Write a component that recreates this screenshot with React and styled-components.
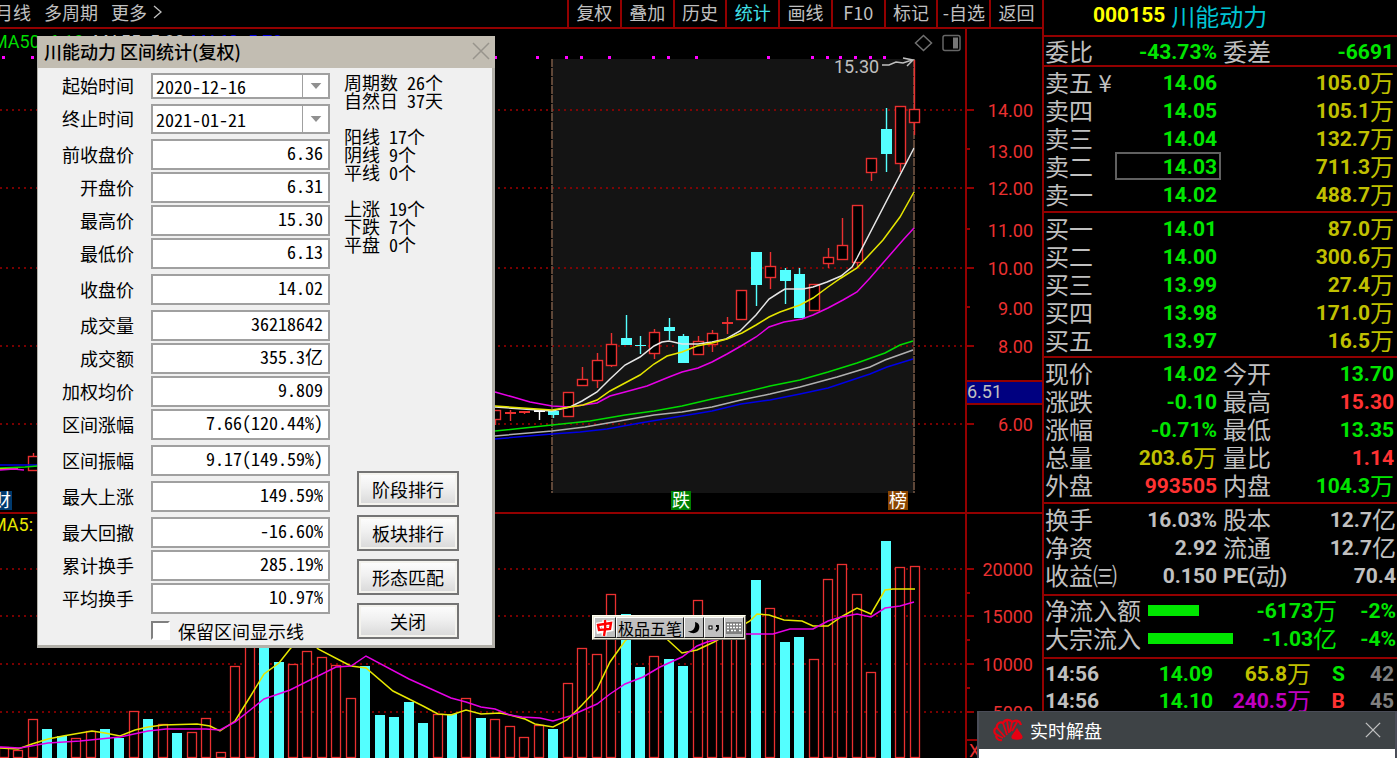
import React, { useState } from 'react'
import styled, { createGlobalStyle } from 'styled-components'

const RED = '#ea3030'
const LINE = '#930000'
const CYAN = '#54ffff'
const GREEN = '#00e600'
const GREY = '#c0c0c0'
const YELLOW = '#c0c000'

const cjk = "'Noto Sans CJK SC', sans-serif"
const latin = "Roboto, 'Noto Sans CJK SC', sans-serif"

const GlobalStyle = createGlobalStyle`
  * {
    box-sizing: border-box;
  }

  body {
    margin: 0;
    background: #000;
    color: ${GREY};
    font-family: ${cjk};
    overflow: hidden;
  }

  button, select, input {
    font-family: inherit;
  }
`

const Page = styled.div`
  position: relative;
  display: grid;
  grid-template-columns: minmax(0, 1fr) 355px;
  height: 100vh;
  overflow: hidden;
`

/* ---------- left side: toolbar and charts ---------- */

const Main = styled.main`
  min-width: 0;
`

const Toolbar = styled.nav`
  display: flex;
  justify-content: space-between;
  height: 29px;
  border-bottom: 2px solid ${LINE};
`

const Periods = styled.div`
  display: flex;
  gap: 13px;
  margin-left: -5px;
`

const PlainButton = styled.button`
  display: flex;
  align-items: center;
  gap: 6px;
  padding: 0 0 4px;
  border: 0;
  background: none;
  color: ${GREY};
  font-size: 18px;
  line-height: 22px;
  white-space: nowrap;
`

const Tools = styled.div`
  display: grid;
  grid-template-columns: repeat(9, 1fr);
  width: 475px;
`

const ToolButton = styled.button`
  padding: 0 0 4px;
  border: 0;
  border-left: 2px solid ${LINE};
  background: none;
  color: ${({ $active }) => ($active ? '#40e0e8' : GREY)};
  font-size: 18px;
  line-height: 22px;
  white-space: nowrap;
`

const Pane = styled.section`
  display: grid;
  grid-template-columns: minmax(0, 1fr) 77px;
  border-bottom: 2px solid ${LINE};

  &:last-child {
    border-bottom: 0;
  }
`

const Plot = styled.svg`
  display: block;
  width: 100%;
  height: ${({ $height }) => $height}px;
  font-family: ${latin};
`

const Axis = styled.svg`
  display: block;
  width: 77px;
  height: ${({ $height }) => $height}px;
  border-left: 2px solid ${LINE};
  font-family: ${latin};
  font-size: 18px;
`

/* ---------- right side: quote panel ---------- */

const QuotePanel = styled.aside`
  border-left: 2px solid ${LINE};
  overflow: hidden;
`

const Heading = styled.h1`
  display: flex;
  align-items: center;
  gap: 6px;
  height: 37px;
  margin: 0;
  padding: 0 0 4px 49px;
  border-bottom: 2px solid ${LINE};
  color: #00c4d4;
  font-size: 24px;
  font-weight: 400;
  line-height: 28px;
`

const QuoteTable = styled.table`
  width: 100%;
  table-layout: fixed;
  border-collapse: collapse;

  th, td {
    height: ${({ $row }) => $row || 28}px;
    padding: 0;
    font-size: 24px;
    font-weight: 400;
    line-height: ${({ $row }) => $row || 28}px;
    text-align: right;
    white-space: nowrap;
    overflow: visible;
  }

  th {
    text-align: left;
  }
`

const Block = styled.div`
  padding: ${({ $pad }) => $pad || '1px 3px 3px 1px'};
  border-bottom: 2px solid ${LINE};
`

const Value = styled.td`
  padding-right: ${({ $inner }) => ($inner ? 4 : 0)}px !important;
  color: ${({ $color }) => $color};
  outline: ${({ $focus }) => ($focus ? '2px solid #606060' : 'none')};
  outline-offset: -2px;
`

const SecondLabel = styled.th`
  padding-left: 2px !important;
`

const Num = styled.b`
  color: ${({ $color }) => $color || 'inherit'};
  font-family: ${latin};
  font-size: 21px;
  line-height: 1;
  vertical-align: 2px;
`

const FlowBar = styled.div`
  height: 11px;
  background: ${GREEN};
`

/* ---------- interval statistics dialog ---------- */

const Dialog = styled.form`
  position: absolute;
  top: 36px;
  left: 37px;
  width: 458px;
  border: solid #b2b0a9;
  border-width: 0 3px 3px 1px;
  background: #f0f0f0;
  color: #000;
  font-size: 18px;
  line-height: 18px;
`

const DialogTitle = styled.header`
  display: flex;
  align-items: center;
  justify-content: space-between;
  height: 32px;
  margin-right: -3px;
  padding: 0 5px 2px 6px;
  background: #c2bdb2;

  h2 {
    margin: 0;
    font-size: 18px;
    font-weight: 500;
  }
`

const CloseButton = styled.button`
  display: flex;
  padding: 0;
  border: 0;
  background: none;
  color: ${({ $color }) => $color};
`

const DialogBody = styled.div`
  display: flex;
  gap: 14px;
  padding: 5px 0;
`

const Fields = styled.div`
  display: flex;
  flex-direction: column;
  gap: 2px;
  width: 292px;
`

const Field = styled.div`
  display: grid;
  grid-template-columns: 96px 179px;
  column-gap: 17px;
  align-items: center;
  margin-top: ${({ $spaced }) => ($spaced ? 3 : 0)}px;

  label {
    padding-bottom: 2px;
    text-align: right;
  }
`

const TextBox = styled.input`
  width: 100%;
  height: 31px;
  padding: 0 5px 5px;
  border: 2px solid #a0a0a0;
  background: #fff;
  color: #000;
  font-size: 18px;
  font-feature-settings: 'hwid';
  line-height: 22px;
  text-align: right;
`

const DateBox = styled.div`
  display: grid;
  grid-template-columns: 151px 28px;
  grid-template-rows: ${({ $height }) => $height}px;

  select {
    grid-area: 1 / 1 / 2 / 3;
    width: 100%;
    height: 100%;
    padding: 0 30px 0 3px;
    border: 2px solid #a0a0a0;
    border-radius: 0;
    background: #fff;
    color: #000;
    appearance: none;
    font-size: 18px;
    font-feature-settings: 'hwid';
    line-height: 22px;
  }

  svg {
    grid-area: 1 / 2 / 2 / 3;
    width: 28px;
    height: 100%;
    border-left: 1px solid #a0a0a0;
    pointer-events: none;
  }
`

const KeepLine = styled.label`
  display: flex;
  align-items: center;
  gap: 8px;
  margin: 5px 0 0 113px;

  input {
    width: 19px;
    height: 19px;
    margin: 0;
    appearance: none;
    border: 2px solid #fff;
    border-top-color: #808080;
    border-left-color: #808080;
    background: #fff;
  }

  input:checked {
    background: #808080;
  }
`

const Side = styled.div`
  display: flex;
  flex-direction: column;
  justify-content: space-between;
`

const Summary = styled.p`
  margin: 0;
  font-feature-settings: 'hwid';
  white-space: pre-line;
`

const Actions = styled.div`
  display: flex;
  flex-direction: column;
  gap: 8px;
  margin-left: 13px;
  padding-bottom: 1px;
`

const ActionButton = styled.button`
  width: 102px;
  height: 36px;
  padding: 0;
  border: 2px solid #747474;
  background: linear-gradient(#fefefe, #f0f0f0 45%, #d8d8d8);
  box-shadow: inset 0 0 0 2px #f4f3ee;
  color: #000;
  font-size: 18px;
`

/* ---------- floating bits ---------- */

const ImeBar = styled.div`
  position: absolute;
  top: 615px;
  left: 592px;
  display: flex;
  height: 25px;
  padding: 1px;
  border: 1px solid #fffff0;
  border-right-color: #707068;
  border-bottom-color: #707068;
  background: #ece9d8;
`

const ImeButton = styled.button`
  display: flex;
  align-items: center;
  justify-content: center;
  min-width: 20px;
  padding: 0 1px;
  border: 1px solid #fff;
  border-right-color: #202020;
  border-bottom-color: #202020;
  background: #c0c0c0;
  color: #000;
  font-size: 16px;
  line-height: 18px;
`

const Notice = styled.section`
  position: absolute;
  right: 0;
  bottom: 0;
  width: 420px;
  border: solid #4a4d58;
  border-width: 1px 2px 0;
`

const NoticeHead = styled.header`
  display: flex;
  align-items: center;
  gap: 5px;
  height: 37px;
  padding: 0 14px 2px;
  background: #3e4346;

  h2 {
    flex: 1;
    margin: 0;
    color: #fff;
    font-size: 18px;
    font-weight: 400;
    line-height: 24px;
  }
`

const NoticeBody = styled.div`
  height: 9px;
  background: #fff;
`

/* ---------- data ---------- */

const tools = ['复权', '叠加', '历史', '统计', '画线', 'F10', '标记', '-自选', '返回']

// r = hollow red bar, c = filled cyan bar
const volumes = [
  'r747', 'r750', 'r719', 'c729', 'c736', 'r738', 'r731', 'c729', 'c738', 'r711', 'c719',
  'r724', 'c733', 'r732', 'r718', 'r752', 'r666', 'r634', 'c620', 'c662', 'r664', 'r651',
  'r657', 'r665', 'r698', 'c666', 'c715', 'c717', 'c702', 'c723', 'r714', 'c714', 'r698',
  'c718', 'r719', 'r726', 'r737', 'r725', 'c729', 'r683', 'r648', 'r654', 'r594', 'c614',
  'c667', 'r656', 'c659', 'c666', 'r600', 'r634', 'r628', 'r620', 'c580', 'r608', 'c642',
  'c637', 'r659', 'r579', 'r564', 'r594', 'r672', 'c541', 'r567', 'r566',
]

// [slot, colour, body top, body bottom, wick top, wick bottom]
const candles = [
  [2, 'r', 456, 470, 453, 470],
  [34, 'r', 410, 419, 410, 425],
  [35, 'r', 412, 414, 410, 421],
  [36, 'r', 411, 413, 411, 414],
  [37, 'w', 410, 412, 410, 420],
  [38, 'c', 411, 415, 409, 418],
  [39, 'r', 392, 416, 392, 416],
  [40, 'r', 379, 385, 367, 385],
  [41, 'r', 360, 380, 353, 388],
  [42, 'r', 344, 365, 333, 367],
  [43, 'c', 338, 345, 315, 345],
  [44, 'c', 345, 346, 336, 354],
  [45, 'r', 332, 353, 329, 359],
  [46, 'c', 327, 331, 318, 340],
  [47, 'c', 336, 363, 334, 363],
  [48, 'r', 341, 354, 336, 354],
  [49, 'r', 333, 344, 330, 352],
  [50, 'r', 322, 324, 317, 334],
  [51, 'r', 290, 319, 290, 319],
  [52, 'c', 252, 285, 252, 306],
  [53, 'r', 266, 277, 252, 289],
  [54, 'c', 270, 281, 268, 304],
  [55, 'c', 274, 318, 268, 318],
  [56, 'r', 284, 310, 284, 310],
  [57, 'r', 257, 263, 248, 268],
  [58, 'r', 245, 259, 218, 259],
  [59, 'r', 205, 262, 205, 268],
  [60, 'r', 158, 172, 158, 181],
  [61, 'c', 129, 154, 108, 172],
  [62, 'r', 106, 163, 106, 172],
  [63, 'r', 109, 122, 60, 135],
]

const priceLines = [
  { color: '#0000e6', points: '495,439 552,434 580,432 607,429 640,423 682,416 712,411 741,404 770,400 800,394 828,388 870,374 887,367 913,359' },
  { color: '#b0b0b0', points: '495,436 552,431 585,427 625,420 654,415 682,412 712,407 741,400 770,394 800,387 837,377 870,367 885,360 913,350' },
  { color: '#00dc00', points: '495,431 552,425 590,421 625,415 654,411 682,406 712,399 741,393 770,386 800,380 828,372 857,363 885,353 900,345 913,341' },
  { color: '#e600e6', points: '495,392 513,397 530,402 552,406 570,407 583,405 597,403 610,396 625,392 647,386 669,377 682,372 698,368 712,362 727,354 741,346 756,337 769,327 784,322 802,319 813,315 828,308 843,300 857,292 870,278 883,263 903,240 914,228' },
  { color: '#e6e6e6', points: '495,407 552,411 570,407 582,401 597,392 610,379 625,365 640,357 654,346 662,342 669,341 682,344 698,344 712,342 726,339 740,331 756,315 769,299 780,292 785,289 803,289 813,287 827,282 841,276 852,267 857,258 914,148' },
  { color: '#e6e600', points: '495,406 552,410 570,407 583,405 597,400 610,391 625,383 640,375 654,364 667,356 682,352 697,346 712,343 727,339 742,333 756,325 769,317 780,312 800,305 813,298 828,287 841,278 857,268 883,240 900,217 914,192' },
  { color: '#0000e6', points: '0,465 38,465' },
  { color: '#00dc00', points: '0,468 25,467 38,466' },
  { color: '#e6e600', points: '0,469 18,469' },
  { color: '#e600e6', points: '0,470 14,469 24,470' },
]

const volumeLines = [
  { color: '#e6e600', points: '0,748 18,749 32,744 48,739 63,736 92,731 105,733 120,736 135,730 148,727 163,725 197,724 210,726 220,731 235,721 250,697 264,674 279,663 290,649 304,634 318,649 347,664 351,666 366,668 393,691 409,699 423,706 438,714 451,715 466,710 481,714 500,713 510,715 525,719 535,724 553,727 567,720 582,705 597,689 610,662 625,641 640,628 655,628 670,642 682,653 697,650 714,642 750,621 757,614 769,615 784,620 802,621 813,626 828,626 841,617 857,608 871,614 885,590 893,589 915,589' },
  { color: '#e600e6', points: '0,747 20,748 48,743 80,741 120,737 148,731 166,729 206,729 220,730 235,722 264,699 290,690 336,667 351,666 366,656 409,679 451,698 466,702 481,707 495,709 510,715 522,717 540,718 553,721 570,716 597,704 610,694 625,684 643,677 660,667 682,657 697,646 707,642 740,634 773,634 790,629 813,629 828,621 841,617 857,614 871,617 885,608 900,606 914,602' },
]

const dots = [3, 32, 495, 537, 566, 581, 609, 653, 668, 696, 768, 812, 827, 840, 855, 870, 884]

const priceTicks = [['14.00', 110], ['13.00', 151], ['12.00', 188], ['11.00', 230], ['10.00', 268], ['9.00', 308], ['8.00', 346], ['6.00', 424]]
const volumeTicks = [['20000', 569], ['15000', 616], ['10000', 664], ['5000', 712]]

const sells = [['卖五', '14.06', '105.0'], ['卖四', '14.05', '105.1'], ['卖三', '14.04', '132.7'], ['卖二', '14.03', '711.3'], ['卖一', '14.02', '488.7']]
const buys = [['买一', '14.01', '87.0'], ['买二', '14.00', '300.6'], ['买三', '13.99', '27.4'], ['买四', '13.98', '171.0'], ['买五', '13.97', '16.5']]

const prices = [
  ['现价', '14.02', GREEN, '今开', '13.70', GREEN],
  ['涨跌', '-0.10', GREEN, '最高', '15.30', '#ff3232'],
  ['涨幅', '-0.71%', GREEN, '最低', '13.35', GREEN],
  ['总量', '203.6万', YELLOW, '量比', '1.14', '#ff3232'],
  ['外盘', '993505', '#ff3232', '内盘', '104.3万', GREEN],
]

const finance = [
  ['换手', '16.03%', GREY, '股本', '12.7亿', GREY],
  ['净资', '2.92', GREY, '流通', '12.7亿', GREY],
  ['收益㈢', '0.150', GREY, 'PE(动)', '70.4', GREY],
]

const stats = [
  ['前收盘价', '6.36'],
  ['开盘价', '6.31'],
  ['最高价', '15.30'],
  ['最低价', '6.13'],
  ['收盘价', '14.02', true],
  ['成交量', '36218642', true],
  ['成交额', '355.3亿'],
  ['加权均价', '9.809'],
  ['区间涨幅', '7.66(120.44%)'],
  ['区间振幅', '9.17(149.59%)', true],
  ['最大上涨', '149.59%', true],
  ['最大回撤', '-16.60%', true],
  ['累计换手', '285.19%'],
  ['平均换手', '10.97%'],
]

const summary = `周期数 26个
自然日 37天

阳线 17个
阴线 9个
平线 0个

上涨 19个
下跌 7个
平盘 0个`

const slotX = slot => Math.round(3.8 + slot * 14.459)

/* ---------- components ---------- */

// digits are bold latin, the unit behind them is a regular CJK character
const Figure = ({ text }) => {
  const parts = text.match(/[\u4e00-\u9fff\u3220-\u3229]+|[^\u4e00-\u9fff\u3220-\u3229]+/g)
  return parts.map((part, i) =>
    /[\u4e00-\u9fff\u3220-\u3229]/.test(part) ? <span key={i}>{part}</span> : <Num key={i}>{part}</Num>
  )
}

const Grid = ({ rows }) =>
  rows.map(y => (
    <line key={y} x1="0" x2="964" y1={y} y2={y} stroke="#a00000" strokeWidth="2" strokeDasharray="2 4" opacity="0.75" />
  ))

const Lines = ({ lines }) =>
  lines.map((line, i) => (
    <polyline key={i} points={line.points} fill="none" stroke={line.color} strokeWidth="1.5" />
  ))

const Candle = ({ data: [slot, kind, top, bottom, high, low] }) => {
  const x = Math.min(slotX(slot), 914)
  const color = { r: RED, c: CYAN, w: '#ffffff' }[kind]
  const solid = kind !== 'r' || bottom - top < 4
  return (
    <g>
      <line x1={x + 0.5} x2={x + 0.5} y1={high} y2={low} stroke={color} strokeWidth="1.4" />
      {solid ? (
        <rect x={x - 5} y={top} width="11" height={Math.max(bottom - top, 1)} fill={color} />
      ) : (
        <rect x={x - 4.5} y={top + 0.5} width="10" height={bottom - top} fill="#000" stroke={color} strokeWidth="1.4" />
      )}
    </g>
  )
}

const Badge = ({ x, label, color }) => (
  <g>
    <rect x={x} y="491" width="20" height="19" fill={color} />
    <text x={x + 10} y="507" textAnchor="middle" fontSize="18" fill="#fff">{label}</text>
  </g>
)

const PriceChart = () => (
  <Pane>
    <Plot $height={483} viewBox="0 29 965 483" preserveAspectRatio="xMaxYMin meet" role="img" aria-label="K线图">
      <rect x="552" y="59" width="362" height="434" fill="#141414" />
      <Grid rows={[110, 188, 268, 346, 424]} />
      <g fontSize="18">
        <text x="-8" y="48" fill="#00dc00">MA50: 6.18</text>
        <text x="93" y="48" fill={GREY}>MA55: 5.80</text>
        <text x="191" y="48" fill="#0000e6">MA60: 5.73</text>
        <text x="834" y="73" fill={GREY}>15.30</text>
      </g>
      {dots.map(x => <rect key={x} x={x - 1} y="56" width="3" height="3" fill="#ff00ff" />)}
      <path d="M552 59V493M914 59V493" stroke="#6e5240" strokeWidth="2" strokeDasharray="8 1" opacity="0.85" />
      {candles.map(data => <Candle key={data[0]} data={data} />)}
      <Lines lines={priceLines} />
      <path d="M882 65L889 65L896 62L903 63L912 60M903 58L913 60L907 66" fill="none" stroke={GREY} strokeWidth="1.5" />
      <path d="M923.5 35.5L931.5 43L923.5 50.5L915.5 43Z" fill="none" stroke="#707070" strokeWidth="1.5" />
      <rect x="943" y="35.5" width="17" height="15" rx="2" fill="none" stroke="#666" strokeWidth="1.5" />
      <rect x="953" y="37.5" width="5" height="11" fill="#777" />
      <Badge x={-8} label="财" color="#003a6e" />
      <Badge x={671} label="跌" color="#008000" />
      <Badge x={888} label="榜" color="#8a4500" />
    </Plot>
    <Axis $height={483} viewBox="967 29 75 483" fill={RED}>
      {[110, 188, 268, 346, 424].map(y => <rect key={y} x="967" y={y - 1} width="7" height="2" fill={LINE} />)}
      {[149, 229, 307].map(y => <rect key={y} x="967" y={y - 1} width="3" height="2" fill={LINE} />)}
      {priceTicks.map(([label, y]) => <text key={label} x="1033" y={y + 7} textAnchor="end">{label}</text>)}
      <rect x="966" y="381" width="77" height="23" fill="#000080" stroke={LINE} strokeWidth="2" />
      <text x="967" y="398" fill={GREY}>6.51</text>
    </Axis>
  </Pane>
)

const VolumeChart = () => (
  <Pane>
    <Plot $height={244} viewBox="0 514 965 244" preserveAspectRatio="xMaxYMin meet" role="img" aria-label="成交量">
      <Grid rows={[569, 616, 664, 712]} />
      <text x="-9" y="531" fontSize="18" fill="#e6e600">MA5: 17</text>
      {volumes.map((bar, i) => {
        const top = Number(bar.slice(1))
        const x = slotX(i)
        return bar[0] === 'c' ? (
          <rect key={i} x={x - 5} y={top} width="10" height={758 - top} fill={CYAN} />
        ) : (
          <rect key={i} x={x - 4.5} y={top + 0.5} width="9" height={757 - top} fill="#000" stroke={RED} strokeWidth="1.3" />
        )
      })}
      <Lines lines={volumeLines} />
    </Plot>
    <Axis $height={244} viewBox="967 514 75 244" fill={RED}>
      {[569, 616, 664, 712].map(y => <rect key={y} x="967" y={y - 1} width="7" height="2" fill={LINE} />)}
      {[593, 640, 688].map(y => <rect key={y} x="967" y={y - 1} width="3" height="2" fill={LINE} />)}
      {volumeTicks.map(([label, y]) => <text key={label} x="1033" y={y + 7} textAnchor="end">{label}</text>)}
      <rect x="967" y="739" width="75" height="2" fill={LINE} />
      <text x="969" y="757">X10</text>
    </Axis>
  </Pane>
)

const BookTable = ({ rows, focus }) => (
  <QuoteTable>
    <colgroup>
      <col style={{ width: 70 }} />
      <col style={{ width: 106 }} />
      <col />
    </colgroup>
    <tbody>
      {rows.map(([label, price, amount]) => (
        <tr key={label}>
          <th scope="row">{label}{label === '卖五' && ' ¥'}</th>
          <Value $inner $color={GREEN} $focus={label === focus}><Num>{price}</Num></Value>
          <Value $color={YELLOW}><Figure text={`${amount}万`} /></Value>
        </tr>
      ))}
    </tbody>
  </QuoteTable>
)

const PairTable = ({ rows }) => (
  <QuoteTable>
    <colgroup>
      <col style={{ width: 70 }} />
      <col style={{ width: 106 }} />
      <col style={{ width: 78 }} />
      <col />
    </colgroup>
    <tbody>
      {rows.map(([label, value, color, label2, value2, color2]) => (
        <tr key={label}>
          <th scope="row">{label}</th>
          <Value $inner $color={color}><Figure text={value} /></Value>
          <SecondLabel scope="row"><Figure text={label2} /></SecondLabel>
          <Value $color={color2}><Figure text={value2} /></Value>
        </tr>
      ))}
    </tbody>
  </QuoteTable>
)

const FlowTable = () => (
  <QuoteTable>
    <colgroup>
      <col style={{ width: 103 }} />
      <col style={{ width: 86 }} />
      <col style={{ width: 103 }} />
      <col />
    </colgroup>
    <tbody>
      {[['净流入额', 51, '-6173万', '-2%'], ['大宗流入', 85, '-1.03亿', '-4%']].map(([label, width, value, percent]) => (
        <tr key={label}>
          <th scope="row">{label}</th>
          <td><FlowBar style={{ width }} /></td>
          <Value $color={GREEN}><Figure text={value} /></Value>
          <Value $color={GREEN}><Figure text={percent} /></Value>
        </tr>
      ))}
    </tbody>
  </QuoteTable>
)

const TickTable = () => (
  <QuoteTable $row={27}>
    <colgroup>
      <col style={{ width: 70 }} />
      <col style={{ width: 98 }} />
      <col style={{ width: 98 }} />
      <col style={{ width: 34 }} />
      <col />
    </colgroup>
    <tbody>
      {[['14.09', '65.8万', YELLOW, 'S', GREEN, '42'], ['14.10', '240.5万', '#c000c0', 'B', '#ff3232', '45']].map(row => (
        <tr key={row[0]}>
          <th scope="row"><Num>14:56</Num></th>
          <Value $color={GREEN}><Num>{row[0]}</Num></Value>
          <Value $color={row[2]}><Figure text={row[1]} /></Value>
          <Value $color={row[4]}><Num>{row[3]}</Num></Value>
          <Value $color="#808080"><Num>{row[5]}</Num></Value>
        </tr>
      ))}
    </tbody>
  </QuoteTable>
)

const DateField = ({ id, label, value, height, spaced }) => (
  <Field $spaced={spaced}>
    <label htmlFor={id}>{label}</label>
    <DateBox $height={height}>
      <select id={id} defaultValue={value}>
        <option>{value}</option>
      </select>
      <svg viewBox="0 0 28 26" aria-hidden="true">
        <path d="M8 10H19L13.5 16Z" fill="#909090" />
      </svg>
    </DateBox>
  </Field>
)

const Cross = ({ size }) => (
  <svg width={size} height={size} viewBox="0 0 18 18" aria-hidden="true">
    <path d="M1 1L17 17M17 1L1 17" stroke="currentColor" strokeWidth="1.5" fill="none" />
  </svg>
)

const StatsDialog = () => {
  const [keep, setKeep] = useState(false)

  return (
    <Dialog onSubmit={e => e.preventDefault()}>
      <DialogTitle>
        <h2>川能动力 区间统计(复权)</h2>
        <CloseButton type="button" aria-label="关闭窗口" $color="#98948c"><Cross size={18} /></CloseButton>
      </DialogTitle>
      <DialogBody>
        <Fields>
          <DateField id="from" label="起始时间" value="2020-12-16" height={26} />
          <DateField id="to" label="终止时间" value="2021-01-21" height={30} spaced />
          {stats.map(([label, value, spaced], i) => (
            <Field key={label} $spaced={spaced || i === 0}>
              <label htmlFor={`stat-${i}`}>{label}</label>
              <TextBox id={`stat-${i}`} value={value} readOnly />
            </Field>
          ))}
          <KeepLine>
            <input type="checkbox" checked={keep} onChange={e => setKeep(e.target.checked)} />
            保留区间显示线
          </KeepLine>
        </Fields>
        <Side>
          <Summary>{summary}</Summary>
          <Actions>
            {['阶段排行', '板块排行', '形态匹配', '关闭'].map(label => (
              <ActionButton key={label} type="button">{label}</ActionButton>
            ))}
          </Actions>
        </Side>
      </DialogBody>
    </Dialog>
  )
}

const ImeToolbar = () => (
  <ImeBar>
    <ImeButton type="button" aria-label="中文">
      <svg width="18" height="18" viewBox="0 0 18 18">
        <path d="M2 6L15 4V10L3 12ZM9 1L8 17" fill="none" stroke="#fff" strokeWidth="5" />
        <path d="M2 6L15 4L14 10L3 11ZM9 1Q10 9 8 17" fill="none" stroke="#f00" strokeWidth="2.4" />
      </svg>
    </ImeButton>
    <ImeButton type="button">极品五笔</ImeButton>
    <ImeButton type="button" aria-label="半角">
      <svg width="14" height="14" viewBox="0 0 14 14">
        <path d="M8 1C12 2 13 5 12 8C11 12 6 14 1 10C6 11 9 7 8 1Z" fill="#000" />
      </svg>
    </ImeButton>
    <ImeButton type="button" aria-label="标点">
      <svg width="14" height="14" viewBox="0 0 14 14">
        <rect x="2" y="5" width="3" height="3" fill="#fff" stroke="#000" />
        <path d="M9 5H11V8L9 10" fill="none" stroke="#000" strokeWidth="1.8" />
      </svg>
    </ImeButton>
    <ImeButton type="button" aria-label="软键盘">
      <svg width="16" height="12" viewBox="0 0 16 12">
        <rect width="16" height="12" fill="#808080" />
        <path d="M1 2.5H15M1 5.5H15M1 8.5H3M5 8.5H11M13 8.5H15" stroke="#fff" strokeWidth="1.6" strokeDasharray="2 1" />
      </svg>
    </ImeButton>
  </ImeBar>
)

const ShellIcon = () => (
  <svg width="32" height="24" viewBox="0 0 32 24" aria-hidden="true">
    <path
      d="M9 22C5 23 2 19 4 17C0 15 1 10 4 10C3 6 7 3 10 5C12 1 17 1 19 4C23 1 27 3 28 7"
      fill="none"
      stroke="#e60012"
      strokeWidth="2.2"
    />
    <path d="M4 17L10 20M4 10L12 19M10 5L14 17M14 3L16 15M19 4L17 14M24 4L19 13" stroke="#e60012" strokeWidth="1.8" />
    <path d="M24 8C25 13 31 17 30 20C29 23 19 23 18 20C17 17 23 13 24 8Z" fill="#e60012" stroke="#3e4346" />
  </svg>
)

const App = () => (
  <>
    <GlobalStyle />
    <Page>
      <Main>
        <Toolbar>
          <Periods>
            <PlainButton type="button">月线</PlainButton>
            <PlainButton type="button">多周期</PlainButton>
            <PlainButton type="button">
              更多
              <svg width="9" height="14" viewBox="0 0 9 14" aria-hidden="true">
                <path d="M1 1L8 7L1 13" fill="none" stroke={GREY} strokeWidth="1.3" />
              </svg>
            </PlainButton>
          </Periods>
          <Tools>
            {tools.map(tool => (
              <ToolButton key={tool} type="button" $active={tool === '统计'}>{tool}</ToolButton>
            ))}
          </Tools>
        </Toolbar>
        <PriceChart />
        <VolumeChart />
      </Main>

      <QuotePanel>
        <Heading><Num $color="#ffff00">000155</Num>川能动力</Heading>
        <Block $pad="0 3px 0 1px">
          <PairTable rows={[['委比', '-43.73%', GREEN, '委差', '-6691', GREEN]]} />
        </Block>
        <Block><BookTable rows={sells} focus="卖二" /></Block>
        <Block $pad="1px 3px 2px 1px"><BookTable rows={buys} /></Block>
        <Block $pad="1px 3px 3px 1px"><PairTable rows={prices} /></Block>
        <Block $pad="1px 1px 5px 1px"><PairTable rows={finance} /></Block>
        <Block $pad="0 1px 5px 1px"><FlowTable /></Block>
        <Block $pad="0 3px 0 1px"><TickTable /></Block>
      </QuotePanel>

      <StatsDialog />
      <ImeToolbar />
      <Notice>
        <NoticeHead>
          <ShellIcon />
          <h2>实时解盘</h2>
          <CloseButton type="button" aria-label="关闭" $color="#c0c0c0"><Cross size={16} /></CloseButton>
        </NoticeHead>
        <NoticeBody />
      </Notice>
    </Page>
  </>
)

export default App
